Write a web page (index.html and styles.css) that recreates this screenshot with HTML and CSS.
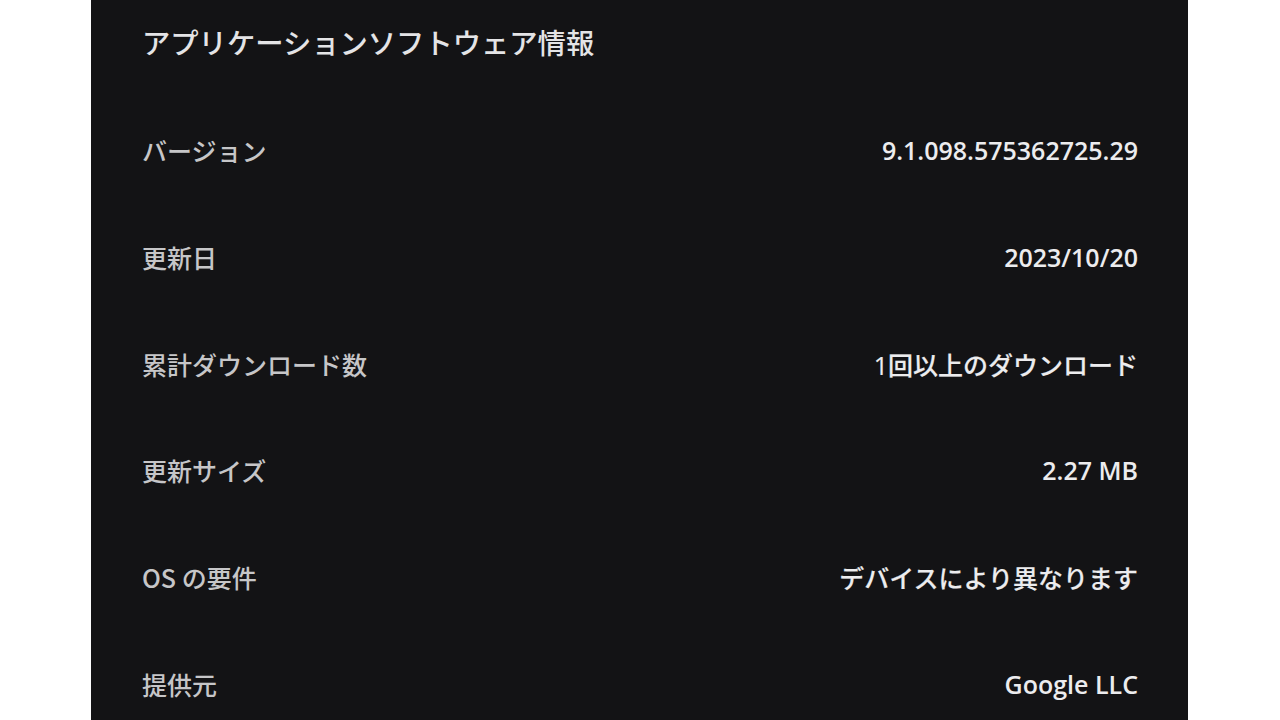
FILE: index.html
```html
<!DOCTYPE html>
<html lang="ja">
<head>
<meta charset="utf-8">
<title>アプリケーションソフトウェア情報</title>
<link rel="stylesheet" href="styles.css">
</head>
<body>
<main class="panel">
  <h1 class="title">アプリケーションソフトウェア情報</h1>
  <dl class="info">
    <div class="row"><dt class="label">バージョン</dt><dd class="value latin">9.1.098.575362725.29</dd></div>
    <div class="row"><dt class="label">更新日</dt><dd class="value latin">2023/10/20</dd></div>
    <div class="row"><dt class="label">累計ダウンロード数</dt><dd class="value">1回以上のダウンロード</dd></div>
    <div class="row"><dt class="label">更新サイズ</dt><dd class="value latin">2.27 MB</dd></div>
    <div class="row"><dt class="label">OS の要件</dt><dd class="value">デバイスにより異なります</dd></div>
    <div class="row"><dt class="label">提供元</dt><dd class="value latin">Google LLC</dd></div>
  </dl>
</main>
</body>
</html>
```
FILE: styles.css
```css
html, body {
  margin: 0;
  padding: 0;
  background: #ffffff;
  height: 720px;
  overflow: hidden;
}
body {
  display: flex;
  justify-content: flex-start;
  font-family: "Noto Sans CJK JP", "Noto Sans", sans-serif;
}
.panel {
  margin-left: 91px;
  width: 1097px;
  height: 720px;
  box-sizing: border-box;
  padding: 0 50px 0 51px;
  background: #131315;
}
.title {
  margin: 0;
  height: 84px;
  line-height: 84px;
  font-size: 28.3px;
  font-weight: 500;
  color: #e4e4e6;
  white-space: nowrap;
}
.info {
  margin: 13px 0 0 0;
}
.row {
  height: 106.7px;
  display: flex;
  align-items: center;
  justify-content: space-between;
}
.label {
  margin: 0;
  font-size: 25px;
  font-weight: 500;
  color: #c6c6c8;
  white-space: nowrap;
}
.value {
  margin: 0;
  font-family: "Open Sans", "Noto Sans CJK JP", sans-serif;
  font-size: 25px;
  font-weight: 500;
  color: #ececee;
  white-space: nowrap;
  -webkit-text-stroke: 0.15px #ececee;
}
.value.latin {
  font-weight: 600;
  -webkit-text-stroke: 0;
}
```
